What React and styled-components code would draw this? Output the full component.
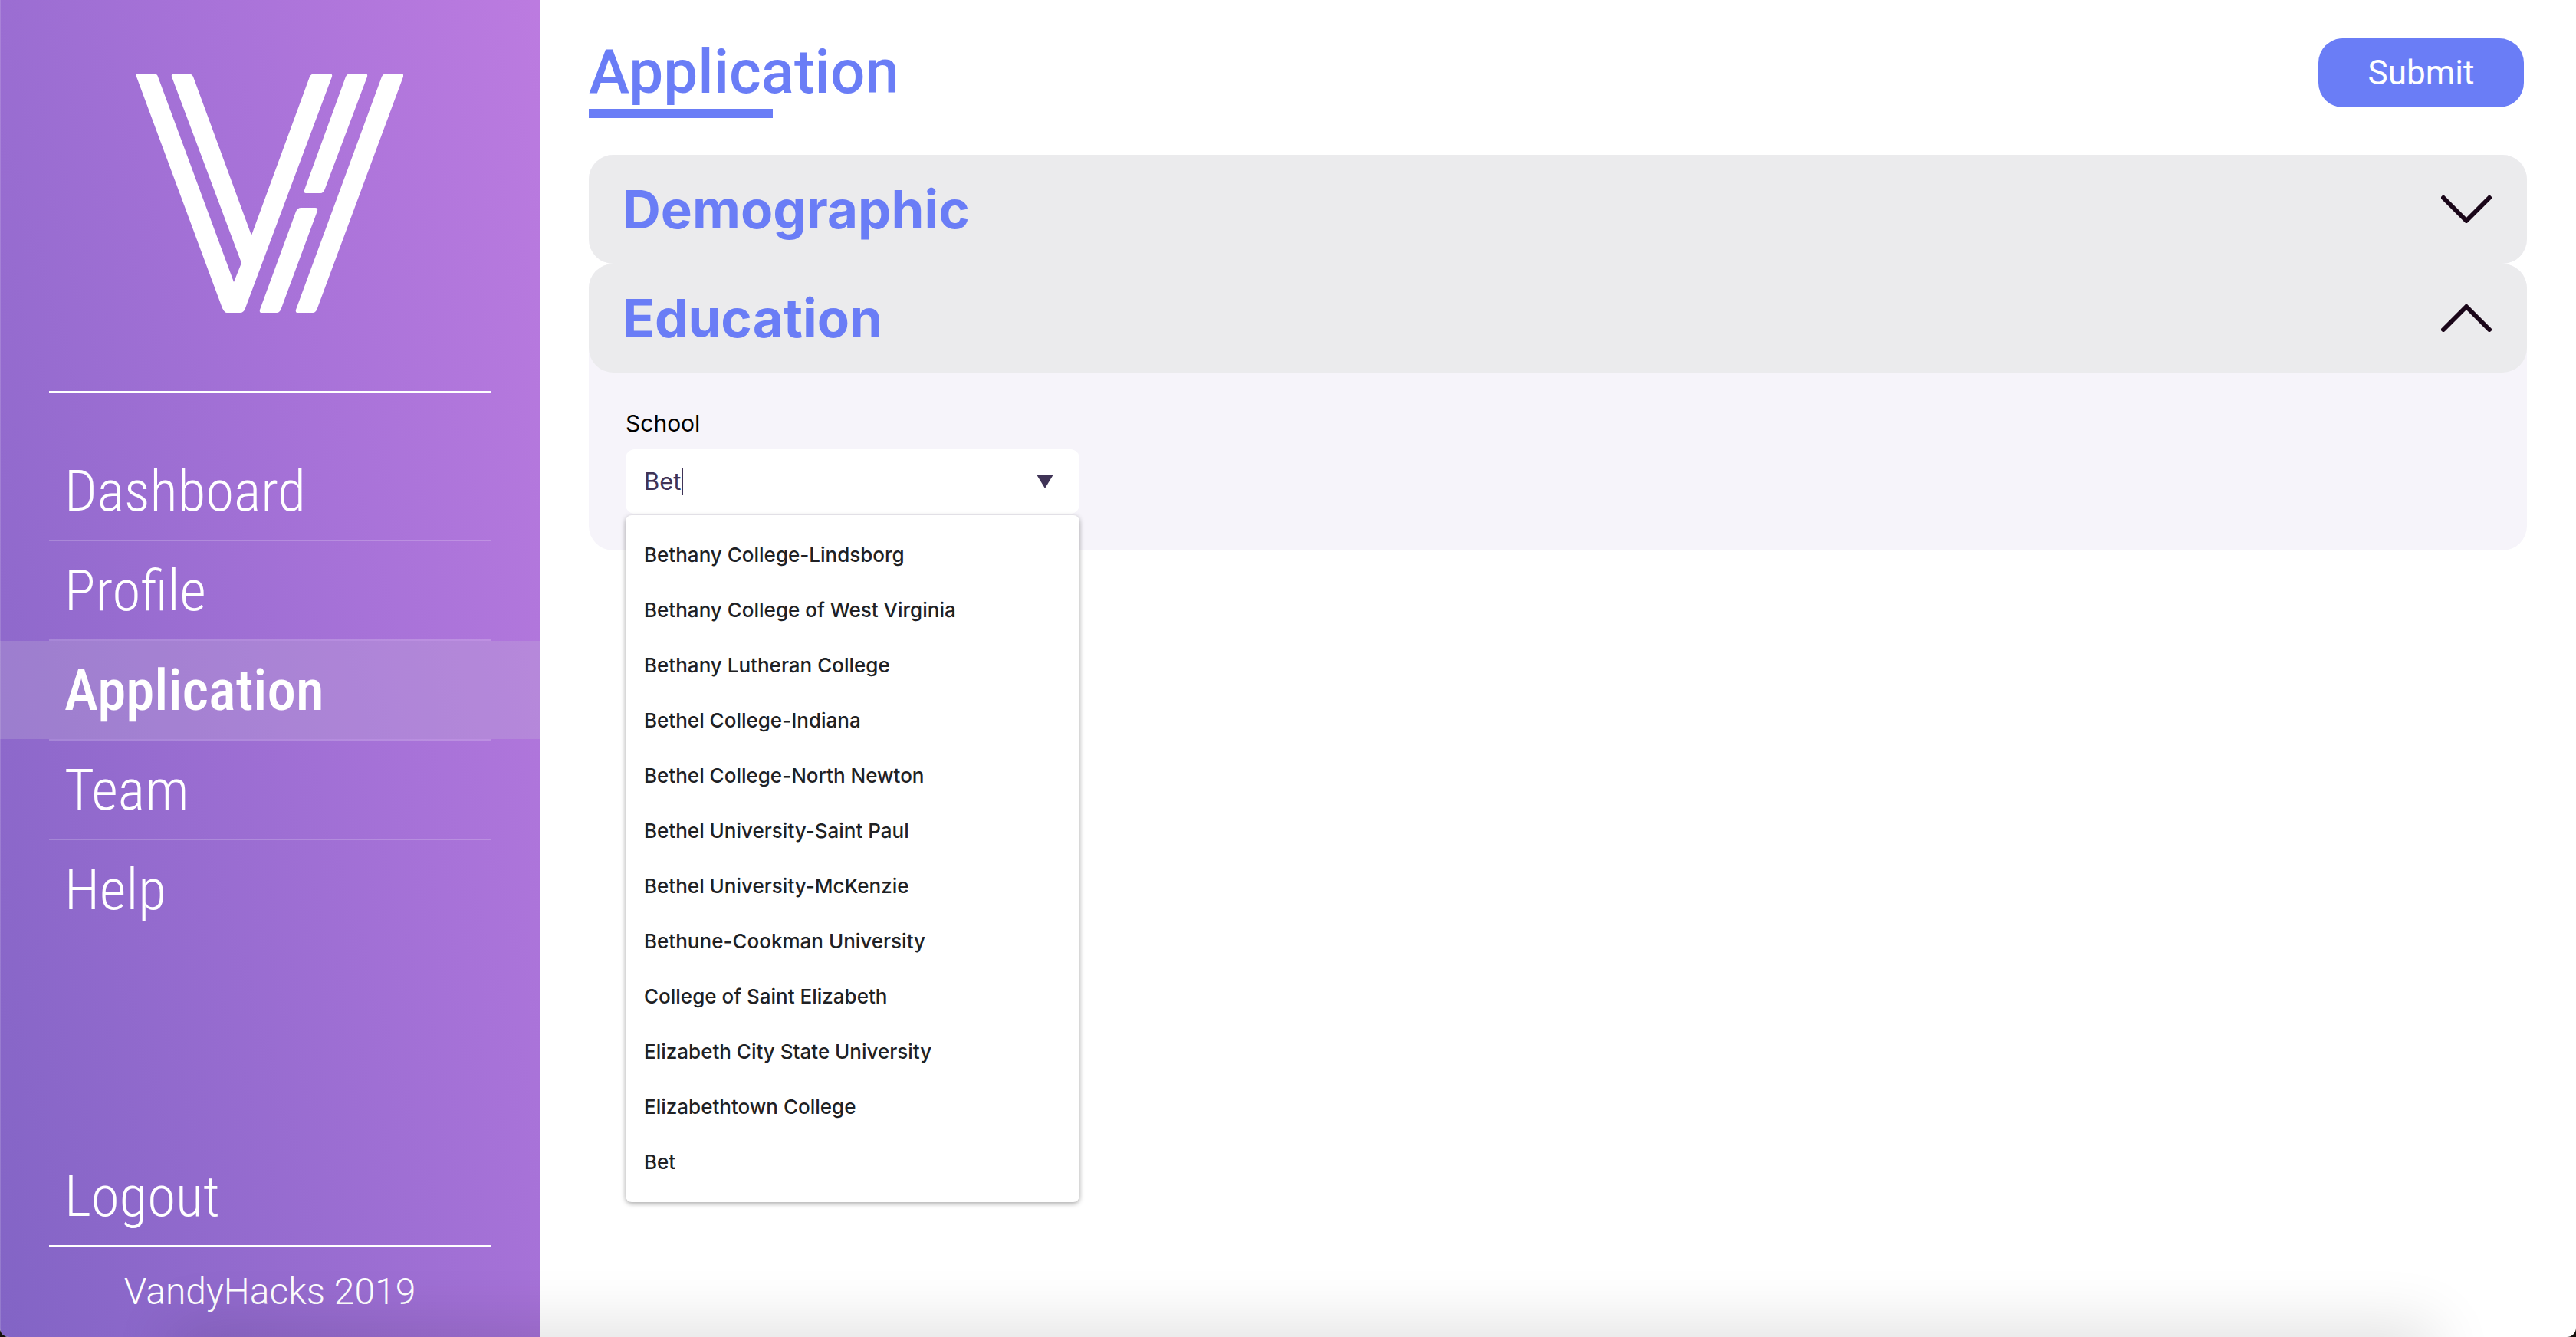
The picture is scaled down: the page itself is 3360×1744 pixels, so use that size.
import React, { useState } from "react";
import styled, { createGlobalStyle } from "styled-components";

const GlobalStyle = createGlobalStyle`
  *, *::before, *::after { box-sizing: border-box; }
  html { background: #14100c; }
  body { margin: 0; font-family: Roboto, "Liberation Sans", sans-serif; }
  h1, h2, ul { margin: 0; padding: 0; }
  ul { list-style: none; }
`;

const accent = "#6a7df6";
const systemFont = `Inter, "Liberation Sans", sans-serif`;

const Page = styled.div`
  position: relative;
  display: flex;
  min-height: 100vh;
  overflow: hidden;
  background: #fff;
  border-radius: 0 0 12px 12px;
`;

const DockShade = styled.div`
  position: absolute;
  top: 100%;
  left: 240px;
  right: 200px;
  height: 60px;
  box-shadow: 0 0 80px 16px rgba(0, 0, 0, 0.12);
  pointer-events: none;
`;

const Sidebar = styled.aside`
  display: flex;
  flex: 0 0 704px;
  flex-direction: column;
  padding-top: 96px;
  color: #fff;
  background: linear-gradient(74deg, #8264c5 0%, #a772d8 62%, #bc7be0 100%);
  box-shadow: inset 1px 0 rgba(255, 255, 255, 0.15);
`;

const Logo = styled.svg`
  align-self: center;
  width: 348px;
  height: 312px;
  margin-bottom: 102px;
  fill: #fff;
`;

const Rule = styled.hr`
  width: 576px;
  height: 2px;
  margin: 0 auto;
  border: 0;
  background: #fff;
`;

const NavList = styled.ul`
  margin-top: 64px;
`;

const NavItem = styled.li`
  & + &::before {
    content: "";
    display: block;
    width: 576px;
    height: 2px;
    margin: 0 auto;
    background: rgba(255, 255, 255, 0.2);
  }
`;

const NavLink = styled.a`
  display: block;
  padding-left: 84px;
  font-family: "Roboto Condensed", Roboto, sans-serif;
  font-size: 75px;
  font-weight: ${({ $active }) => ($active ? 500 : 300)};
  line-height: 128px;
  color: #fff;
  text-decoration: none;
  background: ${({ $active }) => ($active ? "rgba(198, 193, 214, 0.25)" : "none")};
`;

const SidebarFoot = styled.footer`
  margin-top: auto;
`;

const Copyright = styled.p`
  margin: 0;
  font-size: 48px;
  font-weight: 300;
  line-height: 118px;
  text-align: center;
`;

const Main = styled.main`
  flex: 1;
  min-width: 0;
  padding: 50px 64px;
`;

const Header = styled.header`
  display: flex;
  align-items: flex-start;
  justify-content: space-between;
  margin-bottom: 48px;
  padding-right: 4px;
`;

const Title = styled.h1`
  font-size: 80px;
  font-weight: 500;
  line-height: 88px;
  color: ${accent};

  &::after {
    content: "";
    display: block;
    width: 240px;
    height: 12px;
    margin-top: 4px;
    background: ${accent};
  }
`;

const SubmitButton = styled.button`
  width: 268px;
  height: 90px;
  padding: 0;
  border: 0;
  border-radius: 32px;
  font-family: inherit;
  font-size: 44px;
  font-weight: 400;
  color: #fff;
  background: ${accent};
`;

const Section = styled.section`
  border-radius: 32px;
  background: #f6f4fa;
`;

const SectionToggle = styled.button`
  display: flex;
  align-items: center;
  justify-content: space-between;
  width: 100%;
  height: 142px;
  padding: 0 46px 0 44px;
  border: 0;
  border-radius: 32px;
  font-family: ${systemFont};
  font-size: 69px;
  font-weight: 700;
  color: ${accent};
  background: #ebebed;
`;

const Chevron = styled.svg`
  width: 66px;
  height: 36px;
  fill: none;
  stroke: #1a0619;
  stroke-width: 6;
  stroke-linecap: round;
  stroke-linejoin: round;
`;

const SectionBody = styled.div`
  padding: 46px 48px 48px;
  font-family: ${systemFont};
`;

const Label = styled.label`
  display: block;
  margin-bottom: 14px;
  font-size: 30px;
  line-height: 40px;
  color: #000;
`;

const Combo = styled.div`
  position: relative;
  width: 592px;
`;

const Field = styled.div`
  display: flex;
  align-items: center;
  height: 84px;
  padding: 0 34px 0 24px;
  border-radius: 12px;
  background: #fff;
`;

const FieldInput = styled.input`
  field-sizing: content;
  padding: 0;
  border: 0;
  outline: 0;
  font-family: inherit;
  font-size: 31px;
  line-height: 40px;
  color: #3f3356;
  caret-color: transparent;
  background: transparent;
`;

const Caret = styled.span`
  width: 2px;
  height: 36px;
  background: #3f3356;
`;

const FieldArrow = styled.svg`
  width: 22px;
  height: 18px;
  margin-left: auto;
  fill: #3f3356;
`;

const Menu = styled.ul`
  position: absolute;
  top: calc(100% + 2px);
  left: 0;
  width: 100%;
  && { padding: 16px 0; }
  border-radius: 8px;
  background: #fff;
  box-shadow: 0 2px 6px rgba(0, 0, 0, 0.35);
`;

const Option = styled.li`
  padding: 0 24px;
  font-size: 26px;
  font-weight: 500;
  line-height: 72px;
  color: #202124;
`;

const pages = ["Dashboard", "Profile", "Application", "Team", "Help"];

const schools = [
  "Bethany College-Lindsborg",
  "Bethany College of West Virginia",
  "Bethany Lutheran College",
  "Bethel College-Indiana",
  "Bethel College-North Newton",
  "Bethel University-Saint Paul",
  "Bethel University-McKenzie",
  "Bethune-Cookman University",
  "College of Saint Elizabeth",
  "Elizabeth City State University",
  "Elizabethtown College",
  "Bet",
];

const chevronPaths = {
  down: "M3 3 L33 33 L63 3",
  up: "M3 33 L33 3 L63 33",
};

function ToggleIcon({ direction }) {
  return (
    <Chevron viewBox="0 0 66 36" aria-hidden="true">
      <path d={chevronPaths[direction]} />
    </Chevron>
  );
}

function BrandMark() {
  return (
    <Logo viewBox="178 96 348 312" role="img" aria-label="VandyHacks">
      <path d="M180 96H200Q205 96 206 100L305 368L315 343L224 100Q223 96 227 96H245Q250 96 252 100L328 307L404 100Q406 96 411 96H430Q434 96 433 100L320 402Q318 408 313 408H296Q293 408 290 402L178 100Q177 96 180 96Z" />
      <path d="M457 96H476Q480 96 479 100L424 246Q422 252 418 252H399Q396 252 397 248L451 100Q453 96 457 96Z" />
      <path d="M504 96H523Q527 96 526 100L414 402Q412 408 408 408H388Q385 408 386 404L498 100Q500 96 504 96Z" />
      <path d="M393 271H411Q415 271 414 275L367 402Q365 408 361 408H341Q338 408 339 404L386 276Q388 271 393 271Z" />
    </Logo>
  );
}

export default function App() {
  const [school, setSchool] = useState("Bet");

  return (
    <>
      <GlobalStyle />
      <Page>
        <Sidebar>
          <BrandMark />
          <Rule />
          <nav>
            <NavList>
              {pages.map((page) => (
                <NavItem key={page}>
                  <NavLink href="#" $active={page === "Application"}>
                    {page}
                  </NavLink>
                </NavItem>
              ))}
            </NavList>
          </nav>
          <SidebarFoot>
            <NavLink href="#">Logout</NavLink>
            <Rule />
            <Copyright>VandyHacks 2019</Copyright>
          </SidebarFoot>
        </Sidebar>
        <Main>
          <Header>
            <Title>Application</Title>
            <SubmitButton type="button">Submit</SubmitButton>
          </Header>
          <Section>
            <h2>
              <SectionToggle type="button" aria-expanded="false">
                Demographic
                <ToggleIcon direction="down" />
              </SectionToggle>
            </h2>
          </Section>
          <Section>
            <h2>
              <SectionToggle type="button" aria-expanded="true">
                Education
                <ToggleIcon direction="up" />
              </SectionToggle>
            </h2>
            <SectionBody>
              <Label htmlFor="school">School</Label>
              <Combo>
                <Field>
                  <FieldInput
                    id="school"
                    type="text"
                    autoComplete="off"
                    value={school}
                    onChange={(event) => setSchool(event.target.value)}
                  />
                  <Caret />
                  <FieldArrow viewBox="0 0 22 18" aria-hidden="true">
                    <path d="M0 0H22L11 18Z" />
                  </FieldArrow>
                </Field>
                <Menu>
                  {schools.map((name) => (
                    <Option key={name}>{name}</Option>
                  ))}
                </Menu>
              </Combo>
            </SectionBody>
          </Section>
        </Main>
        <DockShade />
      </Page>
    </>
  );
}
